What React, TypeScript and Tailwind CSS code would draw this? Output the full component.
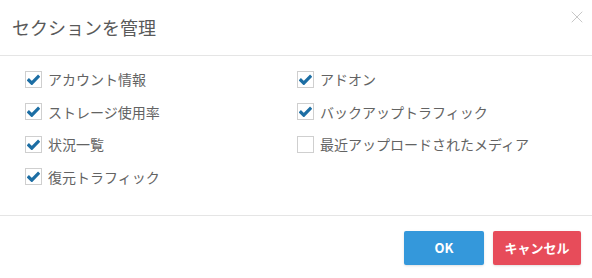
import { X } from "lucide-react";

const left = [
  { label: "アカウント情報", checked: true },
  { label: "ストレージ使用率", checked: true },
  { label: "状況一覧", checked: true },
  { label: "復元トラフィック", checked: true },
];

const right = [
  { label: "アドオン", checked: true },
  { label: "バックアップトラフィック", checked: true },
  { label: "最近アップロードされたメディア", checked: false },
];

function Check({ label, checked }: { label: string; checked: boolean }) {
  return (
    <label className="flex h-[32.5px] items-center gap-[6px]">
      <span className="flex h-[17px] w-[17px] shrink-0 items-center justify-center border border-[#cfcfcf] bg-white">
        {checked && (
          <svg width="13" height="11" viewBox="0 0 13 11">
            <path d="M0.8 5.2 L4.8 9.2 L12.2 1.6" fill="none" stroke="#1c6ea4" strokeWidth="3.2" />
          </svg>
        )}
      </span>
      <span className="text-[14px] leading-none text-[#636363]">{label}</span>
    </label>
  );
}

export default function App() {
  return (
    <div
      className="h-[278px] w-[592px] bg-white"
      style={{ fontFamily: '"Noto Sans CJK JP", "Noto Sans", sans-serif' }}
    >
      <div className="relative flex h-[56px] items-center border-b border-[#e5e5e5] px-[12px]">
        <h2 className="text-[18px] font-normal text-[#595959]">セクションを管理</h2>
        <button className="absolute right-[5px] top-[7px] text-[#c8c8c8]">
          <X size={20} strokeWidth={1.2} />
        </button>
      </div>
      <div className="grid h-[159px] grid-cols-[272px_1fr] pl-[25px] pt-[7px]">
        <div className="flex flex-col">
          {left.map((i) => (
            <Check key={i.label} {...i} />
          ))}
        </div>
        <div className="flex flex-col">
          {right.map((i) => (
            <Check key={i.label} {...i} />
          ))}
        </div>
      </div>
      <div className="flex justify-end gap-[9px] border-t border-[#e5e5e5] pr-[11px] pt-[15px]">
        <button className="h-[34px] w-[80px] rounded-[2px] bg-[#3498db] text-[13px] font-bold text-white shadow-sm">
          OK
        </button>
        <button className="h-[34px] w-[88px] rounded-[2px] bg-[#e74c5a] text-[13px] font-bold text-white shadow-sm">
          キャンセル
        </button>
      </div>
    </div>
  );
}
